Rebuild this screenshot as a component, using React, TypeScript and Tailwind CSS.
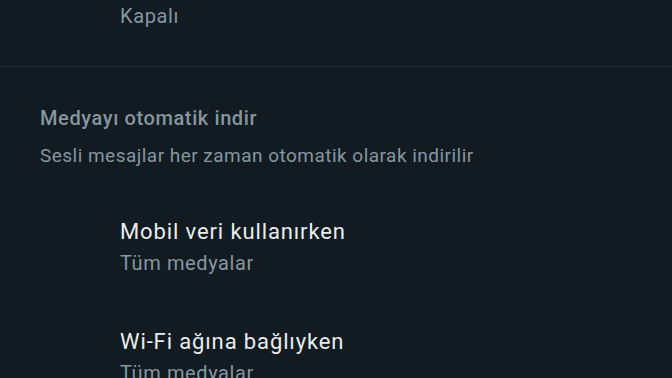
const rows = [
  { title: "Mobil veri kullanırken", value: "Tüm medyalar" },
  { title: "Wi-Fi ağına bağlıyken", value: "Tüm medyalar" },
];

export default function App() {
  return (
    <div className="h-[378px] w-[672px] overflow-hidden bg-[#111b21] font-['Roboto',sans-serif]">
      {/* previous setting, scrolled mostly off screen */}
      <div className="pl-[120px] pt-[2px] pb-[36px]">
        <p className="text-[20px] leading-[28px] tracking-[0.03em] text-[#8696a0]">Kapalı</p>
      </div>
      <div className="h-px bg-[#222d34]" />

      {/* media auto-download section */}
      <div className="px-[40px] pt-[39px]">
        <p className="text-[20px] leading-[24px] font-medium tracking-[0.03em] text-[#8696a0]">
          Medyayı otomatik indir
        </p>
        <p className="mt-[14px] text-[19px] leading-[24px] tracking-[0.025em] text-[#8696a0]">
          Sesli mesajlar her zaman otomatik olarak indirilir
        </p>
      </div>

      <div className="flex flex-col gap-[53px] pt-[50px] pl-[120px]">
        {rows.map((row) => (
          <div key={row.title} className="flex flex-col gap-[5px]">
            <p className="text-[22px] leading-[28px] tracking-[0.04em] text-[#e9edef]">{row.title}</p>
            <p className="text-[20px] leading-[24px] tracking-[0.03em] text-[#8696a0]">{row.value}</p>
          </div>
        ))}
      </div>
    </div>
  );
}
